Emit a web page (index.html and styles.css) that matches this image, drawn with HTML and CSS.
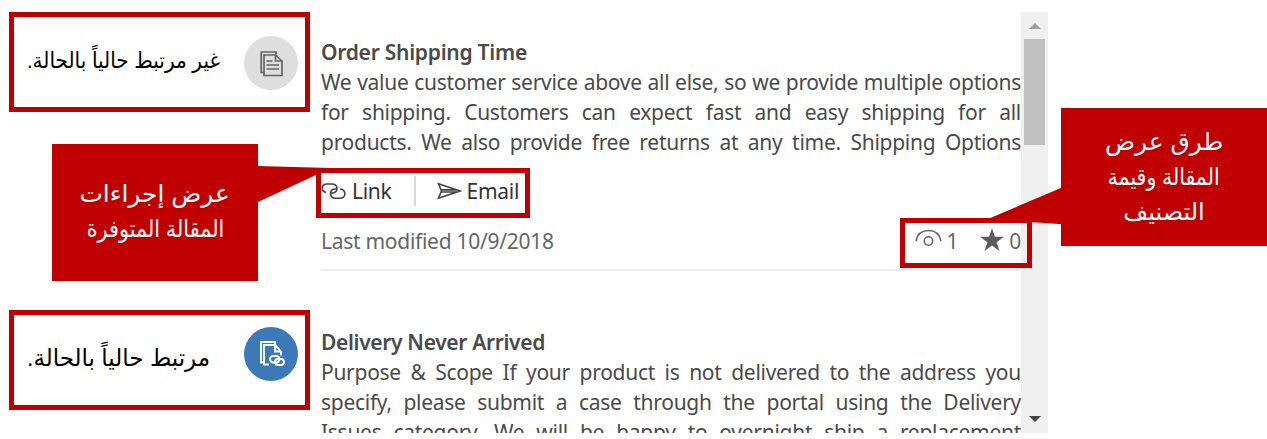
FILE: index.html
```
<!DOCTYPE html>
<html lang="ar">
<head>
<meta charset="utf-8">
<title>Knowledge articles</title>
<link rel="stylesheet" href="styles.css">
</head>
<body>
<main class="stage">
  <section class="notes">
    <div class="note">
      <p class="note-text" dir="rtl"><span class="fit-a">غير مرتبط حالياً بالحالة.</span></p>
      <span class="badge badge-idle">
        <svg width="54" height="54" viewBox="0 0 54 54" fill="none" stroke="#666" stroke-width="1.700">
          <path d="M20 36.500H17.200V16H32v2.500M20 19h11.500l6.500 6v14.500H20z" />
          <path d="M31.500 19v6H38M22.500 25h6M22.500 29h12.500M22.500 33h12.500" />
        </svg>
      </span>
    </div>
    <div class="callout callout-left" dir="rtl"><span class="fit-c">عرض إجراءات</span><span class="fit-d">المقالة المتوفرة</span></div>
    <div class="note">
      <p class="note-text" dir="rtl"><span class="fit-b">مرتبط حالياً بالحالة.</span></p>
      <span class="badge badge-linked">
        <svg width="54" height="54" viewBox="0 0 54 54" fill="none" stroke="#fff" stroke-width="1.900">
          <path d="M20 35.500H17V15h14v2.500M25 37.500H20V18h11l6 6.500v4M31 18v6.500h6" />
          <rect x="26" y="29" width="9.500" height="6.500" rx="3.200" />
          <rect x="31" y="32" width="9" height="6" rx="3" />
        </svg>
      </span>
    </div>
  </section>

  <section class="panel" lang="en">
    <article class="article">
      <h2 class="title t1">Order Shipping Time</h2>
      <p class="body"><span>We value customer service above all else, so we provide multiple options</span><span>for shipping. Customers can expect fast and easy shipping for all</span><span>products. We also provide free returns at any time. Shipping Options</span></p>
      <div class="actions">
        <span class="action">
          <svg width="26" height="20" viewBox="0 0 26 20" fill="none" stroke="#444" stroke-width="1.600">
            <path d="M5 11.500C-.5 10 0 3 6.500 3h4.500c6 0 7 8.500.5 9H9.500" />
            <path d="M19 8c6.500.5 6.500 9.300 0 9.300h-4.500C8.500 17.300 7.500 8.500 13.500 8H16" />
          </svg>
          <span>Link</span>
        </span>
        <span class="rule"></span>
        <span class="action">
          <svg width="25" height="18" viewBox="0 0 25 18" fill="none" stroke="#444" stroke-width="1.600">
            <path d="M1.500 1.700L23 9 1.500 16.300 4.500 9zM4.500 7.900H20M4.500 10H20" />
          </svg>
          <span>Email</span>
        </span>
      </div>
      <div class="meta">
        <span>Last modified 10/9/2018</span>
        <span class="stats">
          <svg class="eye" width="27" height="20" viewBox="0 0 27 20" fill="none" stroke="#666" stroke-width="1.600">
            <path d="M1 12C2.500 4.500 7.500 1.500 13.500 1.500S24.500 4.500 26 12" />
            <circle cx="13.500" cy="12" r="4.200" />
          </svg>
          <span>1</span>
          <svg class="star" width="24" height="24" viewBox="0 0 24 24" fill="#5c5c5c">
            <path d="M12 0l2.900 8.800H24l-7.400 5.400L19.500 23 12 17.600 4.500 23l2.900-8.800L0 8.800h9.100z" />
          </svg>
          <span>0</span>
        </span>
      </div>
    </article>
    <article class="article">
      <h2 class="title t2">Delivery Never Arrived</h2>
      <p class="body"><span>Purpose &amp; Scope If your product is not delivered to the address you</span><span>specify, please submit a case through the portal using the Delivery</span><span>Issues category. We will be happy to overnight ship a replacement</span></p>
    </article>
  </section>

  <div class="scrollbar">
    <span class="arrow arrow-up"></span>
    <span class="thumb"></span>
    <span class="arrow arrow-down"></span>
  </div>

  <div class="callout callout-right" dir="rtl"><span class="fit-e">طرق عرض</span><span class="fit-f">المقالة وقيمة</span><span class="fit-g">التصنيف</span></div>

  <div class="frame frame-actions"></div>
  <div class="frame frame-stats"></div>
  <svg class="tails" width="1267" height="439" fill="#c00000">
    <path d="M257 166L331 168 257 202.500zM1062 187.500L988 219l74 5.300z" />
  </svg>
</main>
</body>
</html>
```
FILE: styles.css
```
* { box-sizing: border-box; }
body { margin: 0; background: #fff; }
.stage {
  position: relative;
  display: flex;
  align-items: flex-start;
  width: 1267px;
  height: 439px;
  overflow: hidden;
  padding-top: 12px;
  font-family: "Noto Sans", "Open Sans", sans-serif;
  font-size: 21px;
  line-height: 30px;
  letter-spacing: -0.28px;
  color: #4a4a4a;
}
.notes {
  flex: none;
  display: flex;
  flex-direction: column;
  width: 321px;
  padding-left: 9px;
}
.note {
  display: flex;
  align-items: center;
  justify-content: space-between;
  width: 301px;
  height: 100px;
  padding: 0 7px 2px 13px;
  border: 5px solid #c00000;
}
.note-text {
  margin: 0;
  color: #000;
  font-family: "Liberation Sans", "DejaVu Sans", sans-serif;
  font-size: 22px;
  letter-spacing: 0;
  white-space: nowrap;
}
.note-text span, .callout span { display: block; }
.note-text span { transform-origin: left center; }
.fit-a { transform: scale(0.912, 1); }
.fit-b { transform: scale(1.045, 1.07); }
.fit-c { transform: scale(1.035, 1); }
.fit-d { transform: scale(0.866, 1); }
.fit-e { transform: scale(1.035, 1); }
.fit-f { transform: scale(0.855, 1); }
.badge {
  flex: none;
  width: 54px;
  height: 54px;
  border-radius: 50%;
}
.badge svg { display: block; }
.badge-idle { background: #dedede; margin-top: 4px; }
.badge-linked { background: #3b79b7; margin-top: -11px; }
.callout {
  flex: none;
  display: flex;
  flex-direction: column;
  align-items: center;
  justify-content: center;
  width: 206px;
  background: #c00000;
  color: #fff;
  font-family: "Liberation Sans", "DejaVu Sans", sans-serif;
  font-size: 24px;
  line-height: 35px;
  letter-spacing: 0;
  white-space: nowrap;
}
.callout-left { height: 137px; margin: 32px 0 29px 43px; padding-bottom: 3px; }
.callout-right { height: 138px; margin: 96px 0 0 13px; padding-bottom: 2px; }
.panel {
  flex: none;
  width: 700px;
  height: 421px;
  padding-top: 25px;
  overflow: hidden;
}
.article { height: 290px; }
.title {
  margin: 0;
  font-size: 21px;
  font-weight: 600;
  line-height: 30px;
}
.t1 { letter-spacing: -0.25px; }
.t2 { letter-spacing: -0.34px; }
.body { margin: 0; }
.body span {
  display: block;
  white-space: nowrap;
  text-align: justify;
  text-align-last: justify;
}
.actions {
  display: flex;
  align-items: center;
  height: 50px;
  padding-top: 18px;
  margin-bottom: 9px;
  color: #333;
}
.action { display: flex; align-items: center; gap: 5px; }
.rule { width: 2px; height: 30px; margin: 0 21px 0 22px; background: #d8d8d8; }
.meta {
  display: flex;
  justify-content: space-between;
  align-items: center;
  height: 55px;
  padding-bottom: 4px;
  border-bottom: 2px solid #eee;
  color: #666;
}
.stats { display: flex; align-items: center; gap: 5px; }
.eye { margin-top: -3px; }
.star { margin: -2px 0 0 17px; }
.scrollbar {
  flex: none;
  display: flex;
  flex-direction: column;
  align-items: center;
  width: 27px;
  height: 421px;
  padding: 11px 0;
  background: #f0f0f0;
}
.arrow { border: 6px solid transparent; }
.arrow-up { border-top: 0; border-bottom-color: #a0a0a0; }
.arrow-down { border-bottom: 0; border-top-color: #444; margin-top: auto; }
.thumb { width: 21px; height: 106px; margin-top: 10px; background: #c1c1c1; }
.frame { position: absolute; border: 5px solid #c00000; height: 50px; }
.frame-actions { left: 316px; top: 168px; width: 214px; }
.frame-stats { left: 900px; top: 218px; width: 132px; }
.tails { position: absolute; left: 0; top: 0; }
```
